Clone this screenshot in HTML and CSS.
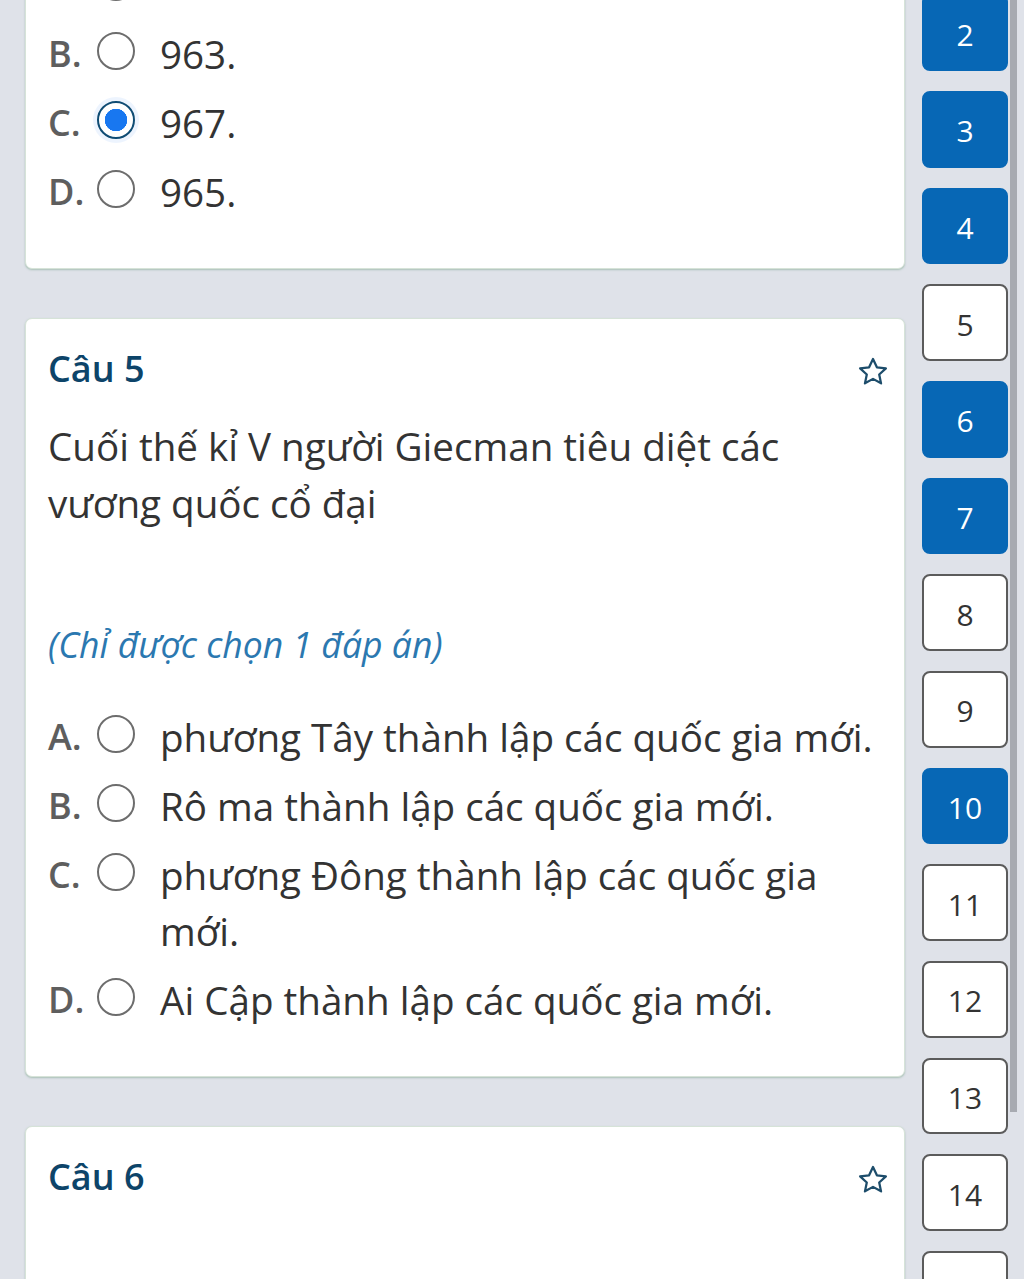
FILE: index.html
```html
<!DOCTYPE html>
<html lang="vi">
<head>
    <meta charset="UTF-8">
    <meta name="viewport" content="width=device-width, initial-scale=1.0">
    <title>Bài kiểm tra Lịch sử</title>
    <link rel="stylesheet" href="styles.css">
</head>
<body>
    <div class="page">
        <div class="main">
            <div class="card card-first">
                <div class="options">
                    <div class="option">
                        <span class="letter">A.</span>
                        <span class="radio"></span>
                        <span class="answer">961.</span>
                    </div>
                    <div class="option">
                        <span class="letter">B.</span>
                        <span class="radio"></span>
                        <span class="answer">963.</span>
                    </div>
                    <div class="option">
                        <span class="letter">C.</span>
                        <span class="radio checked"></span>
                        <span class="answer">967.</span>
                    </div>
                    <div class="option">
                        <span class="letter">D.</span>
                        <span class="radio"></span>
                        <span class="answer">965.</span>
                    </div>
                </div>
            </div>

            <div class="card">
                <div class="card-head">
                    <h3>Câu 5</h3>
                    <svg class="star" viewBox="0 0 24 24" width="34" height="34">
                        <path d="M12 2.8l2.75 5.9 6.35.72-4.72 4.33 1.3 6.27L12 16.85l-5.68 3.17 1.3-6.27L2.9 9.42l6.35-.72z" fill="none" stroke="#1d4d6b" stroke-width="1.6" stroke-linejoin="round"/>
                    </svg>
                </div>
                <p class="question">Cuối thế kỉ V người Giecman tiêu diệt các vương quốc cổ đại</p>
                <p class="hint">(Chỉ được chọn 1 đáp án)</p>
                <div class="options">
                    <div class="option">
                        <span class="letter">A.</span>
                        <span class="radio"></span>
                        <span class="answer">phương Tây thành lập các quốc gia mới.</span>
                    </div>
                    <div class="option">
                        <span class="letter">B.</span>
                        <span class="radio"></span>
                        <span class="answer">Rô ma thành lập các quốc gia mới.</span>
                    </div>
                    <div class="option">
                        <span class="letter">C.</span>
                        <span class="radio"></span>
                        <span class="answer">phương Đông thành lập các quốc gia mới.</span>
                    </div>
                    <div class="option">
                        <span class="letter">D.</span>
                        <span class="radio"></span>
                        <span class="answer">Ai Cập thành lập các quốc gia mới.</span>
                    </div>
                </div>
            </div>

            <div class="card card-last">
                <div class="card-head">
                    <h3>Câu 6</h3>
                    <svg class="star" viewBox="0 0 24 24" width="34" height="34">
                        <path d="M12 2.8l2.75 5.9 6.35.72-4.72 4.33 1.3 6.27L12 16.85l-5.68 3.17 1.3-6.27L2.9 9.42l6.35-.72z" fill="none" stroke="#1d4d6b" stroke-width="1.6" stroke-linejoin="round"/>
                    </svg>
                </div>
            </div>
        </div>

        <div class="nav">
            <span class="num done">1</span>
            <span class="num done">2</span>
            <span class="num done">3</span>
            <span class="num done">4</span>
            <span class="num">5</span>
            <span class="num done">6</span>
            <span class="num done">7</span>
            <span class="num">8</span>
            <span class="num">9</span>
            <span class="num done">10</span>
            <span class="num">11</span>
            <span class="num">12</span>
            <span class="num">13</span>
            <span class="num">14</span>
            <span class="num">15</span>
        </div>

        <div class="scrollbar">
            <div class="thumb"></div>
        </div>
    </div>
</body>
</html>
```

FILE: styles.css
```css
body {
    margin: 0;
    height: 1279px;
    overflow: hidden;
    background: #dfe2e9;
    font-family: "Open Sans", "Noto Sans", sans-serif;
    color: #333;
}
.page {
    display: flex;
    align-items: flex-start;
}
.main {
    width: 880px;
    margin-left: 25px;
    margin-top: -44px;
}
.card {
    background: white;
    border-radius: 7px;
    border: 1px solid #d6e3d8;
    box-shadow: 0 1px 2px rgba(70, 130, 90, 0.35);
    padding: 26px 22px 48px 22px;
    margin-bottom: 49px;
}
.card-first {
    padding-top: 0;
    padding-bottom: 48px;
}
.card-last {
    min-height: 300px;
}
.card-head {
    display: flex;
    justify-content: space-between;
    align-items: flex-start;
}
h3 {
    margin: 0;
    font-size: 36px;
    line-height: 48px;
    font-weight: 600;
    color: #0d4469;
}
.star {
    margin-top: 10px;
    margin-right: -8px;
}
.question {
    margin: 25px 0 0 0;
    font-size: 38.6px;
    line-height: 57px;
    padding-right: 80px;
}
.hint {
    margin: 84px 0 0 0;
    font-size: 35.6px;
    line-height: 56px;
    font-style: italic;
    color: #2b78b0;
}
.options {
    margin-top: 37px;
    display: flex;
    flex-direction: column;
    gap: 13px;
}
.card-first .options {
    margin-top: 0;
}
.option {
    display: flex;
    align-items: flex-start;
}
.letter {
    width: 49px;
    flex-shrink: 0;
    font-size: 36px;
    line-height: 56px;
    font-weight: 600;
    color: #5e5e5e;
}
.radio {
    width: 38px;
    height: 38px;
    box-sizing: border-box;
    margin-top: 6px;
    border: 2px solid #6d6d6d;
    border-radius: 50%;
    flex-shrink: 0;
    margin-right: 25px;
}
.radio.checked {
    border: 2.5px solid #0f4c74;
    background: radial-gradient(circle, #1877f0 0, #1877f0 11px, white 11.5px);
    box-shadow: 0 0 0 4px rgba(24, 119, 240, 0.08);
}
.answer {
    font-size: 38.6px;
    line-height: 56px;
}
.nav {
    width: 86px;
    margin-left: 17px;
    margin-top: -102.5px;
    display: flex;
    flex-direction: column;
    gap: 20px;
}
.num {
    height: 76.7px;
    box-sizing: border-box;
    border: 2px solid #5b5b5b;
    border-radius: 8px;
    background: white;
    display: flex;
    align-items: center;
    justify-content: center;
    font-size: 30px;
    padding-top: 3px;
    color: #333;
}
.num.done {
    background: #0767b5;
    border-color: #0767b5;
    color: white;
}
.scrollbar {
    width: 7px;
    height: 1279px;
    margin-left: 2px;
}
.thumb {
    height: 1112px;
    background: #a7aab1;
}
```
